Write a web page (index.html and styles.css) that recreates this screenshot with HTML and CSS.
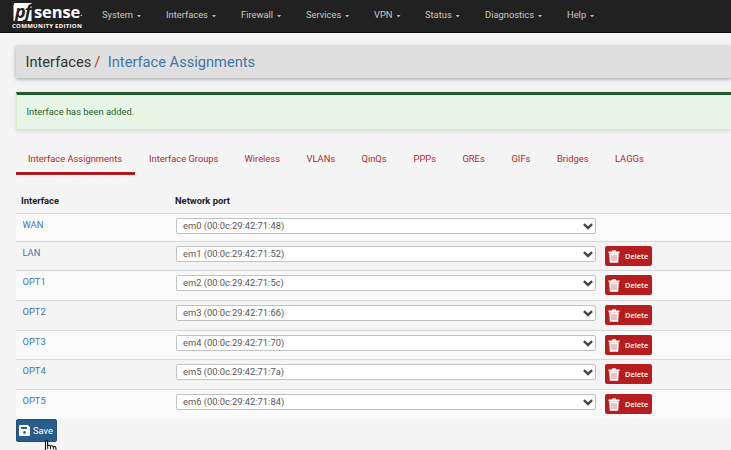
FILE: index.html
```html
<!DOCTYPE html>
<html lang="en">
<head>
<meta charset="utf-8">
<title>Interface Assignments</title>
<link rel="stylesheet" href="styles.css">
</head>
<body>
<svg class="defs" width="0" height="0" aria-hidden="true">
  <symbol id="trash" viewBox="0 0 12 13">
    <path d="M.5 1.5h3.2L4.5.2h3l.8 1.3h3.2v1.7H.5z" fill="#fff"/>
    <path d="M1.2 3.2h9.6L10.2 12.8H1.8z" fill="#fff"/>
    <path d="M4 5v6M6 5v6M8 5v6" stroke="#cf6668" stroke-width=".8"/>
  </symbol>
  <symbol id="chevron" viewBox="0 0 10 7">
    <path d="M.9 1.2L5 5l4.1-3.8" fill="none" stroke="#484848" stroke-width="2.4"/>
  </symbol>
</svg>
<header class="navbar">
  <div class="logo">
    <div class="brand">
      <svg class="mark" viewBox="0 0 18 18"><path d="M1 0h17v18H0V2z" fill="#fff"/></svg>
      <span class="pf">pf</span><span class="sense">sense</span><span class="dot">.</span>
    </div>
    <div class="edition">COMMUNITY EDITION</div>
  </div>
  <nav class="menu">
    <a class="m1">System<i></i></a><a class="m2">Interfaces<i></i></a><a class="m3">Firewall<i></i></a><a class="m4">Services<i></i></a><a class="m5">VPN<i></i></a><a class="m6">Status<i></i></a><a class="m7">Diagnostics<i></i></a><a class="m8">Help<i></i></a>
  </nav>
</header>
<main>
  <h1 class="crumbs"><span>Interfaces</span><b>/</b><a>Interface Assignments</a></h1>
  <div class="alert">Interface has been added.</div>
  <nav class="tabs">
    <a class="t1 active">Interface Assignments</a><a class="t2">Interface Groups</a><a class="t3">Wireless</a><a class="t4">VLANs</a><a class="t5">QinQs</a><a class="t6">PPPs</a><a class="t7">GREs</a><a class="t8">GIFs</a><a class="t9">Bridges</a><a class="t10">LAGGs</a>
  </nav>
  <section class="table">
    <div class="head"><span>Interface</span><span>Network port</span></div>
    <div class="row odd r28"><a>WAN</a><div class="select">em0 (00:0c:29:42:71:48)<svg><use href="#chevron"/></svg></div></div>
    <div class="row r29"><a>LAN</a><div class="select">em1 (00:0c:29:42:71:52)<svg><use href="#chevron"/></svg></div><button class="delete"><svg><use href="#trash"/></svg>Delete</button></div>
    <div class="row odd"><a>OPT1</a><div class="select">em2 (00:0c:29:42:71:5c)<svg><use href="#chevron"/></svg></div><button class="delete"><svg><use href="#trash"/></svg>Delete</button></div>
    <div class="row"><a>OPT2</a><div class="select">em3 (00:0c:29:42:71:66)<svg><use href="#chevron"/></svg></div><button class="delete"><svg><use href="#trash"/></svg>Delete</button></div>
    <div class="row odd r29"><a>OPT3</a><div class="select">em4 (00:0c:29:42:71:70)<svg><use href="#chevron"/></svg></div><button class="delete"><svg><use href="#trash"/></svg>Delete</button></div>
    <div class="row"><a>OPT4</a><div class="select">em5 (00:0c:29:42:71:7a)<svg><use href="#chevron"/></svg></div><button class="delete"><svg><use href="#trash"/></svg>Delete</button></div>
    <div class="row odd"><a>OPT5</a><div class="select">em6 (00:0c:29:42:71:84)<svg><use href="#chevron"/></svg></div><button class="delete"><svg><use href="#trash"/></svg>Delete</button></div>
  </section>
  <button class="save">
    <svg viewBox="0 0 11 11"><path d="M1.2 0h7.6L11 2.2v7.6a1.2 1.2 0 0 1-1.2 1.2H1.2A1.2 1.2 0 0 1 0 9.8V1.2A1.2 1.2 0 0 1 1.2 0z" fill="#fff"/><path d="M2 2h6v2H2z" fill="#285c8b"/><circle cx="5.5" cy="7.4" r="1.4" fill="#285c8b"/></svg>Save
  </button>
</main>
<svg class="cursor" viewBox="0 0 14 12"><path d="M1.5 12V1.6C1.5.3 3.6.3 3.6 1.6V6c.3-1.1 2.7-1 2.9.3.5-.9 2.6-.7 2.8.6.7-.8 2.6-.3 2.6 1.1v4z" fill="#fff" stroke="#111" stroke-width="1.1"/><path d="M3.7 5.5V9M6.5 6v3M9.4 7v2.4" stroke="#111"/></svg>
</body>
</html>
```

FILE: styles.css
```css
* { box-sizing: border-box; }
body {
  margin: 0;
  height: 450px;
  overflow: hidden;
  position: relative;
  background: #f4f4f4;
  font: 9.35px/14px Roboto, sans-serif;
  color: #333;
}
.defs { position: absolute; }
a { color: #3f76ab; }
button { font: inherit; }

.navbar {
  height: 33px;
  display: flex;
  background: #212121;
  border-bottom: 1px solid #080808;
}
.logo { width: 102px; padding: 3px 0 0 13px; color: #fff; }
.brand { position: relative; height: 18px; display: flex; }
.mark { width: 19px; height: 18px; }
.pf {
  position: absolute;
  left: 2px;
  top: 0;
  font: italic bold 18px/17px "Open Sans", sans-serif;
  letter-spacing: -1px;
  color: #212121;
}
.sense { margin-left: 2px; font: bold 16.5px/18px "Open Sans", sans-serif; letter-spacing: -0.1px; }
.dot { font: bold 7px/14px "Open Sans", sans-serif; padding-top: 4px; height: 18px; }
.edition {
  margin: 2px 0 0 -1px;
  font: bold 6px/7px "Open Sans", sans-serif;
  letter-spacing: 0.3px;
  white-space: nowrap;
}
.menu { display: flex; padding-top: 8px; }
.menu a { color: #c8c8c8; display: flex; white-space: nowrap; }
.menu i {
  margin: 7px 0 0 4px;
  width: 4px;
  height: 2px;
  background: #bbb;
  clip-path: polygon(0 0, 100% 0, 60% 100%, 40% 100%);
}
.m1 { width: 64px; }
.m2 { width: 75px; }
.m3 { width: 65px; }
.m4 { width: 68px; }
.m5 { width: 51px; }
.m6 { width: 60px; }
.m7 { width: 82px; }

main { padding: 13px 0 0 16px; }
.crumbs {
  margin: 0;
  height: 32px;
  padding-left: 9.5px;
  display: flex;
  background: #dfdfdf;
  box-shadow: 0 1px 4px rgba(0, 0, 0, 0.35);
  font: 14.65px/32px Roboto, sans-serif;
}
.crumbs b { margin: 0 7.5px 0 3px; font-weight: 400; color: #c9302c; }

.alert {
  margin-top: 14px;
  height: 38px;
  padding: 11px 9.5px 0;
  background: #e6f5e6;
  border: 1px solid #d9ebcf;
  border-top: 3px solid #205c2b;
  border-right: 0;
  box-shadow: 0 1px 4px rgba(0, 0, 0, 0.12);
  color: #265f2b;
  line-height: 12px;
}

.tabs { display: flex; margin-top: 14px; height: 31px; }
.tabs a { padding: 8px 0 0 12px; color: #b0282c; white-space: nowrap; }
.tabs .active { border-bottom: 3px solid #ab1a20; margin-right: 2px; }
.t1 { width: 119px; }
.t2 { width: 95.5px; }
.t3 { width: 62px; }
.t4 { width: 55px; }
.t5 { width: 52px; }
.t6 { width: 49px; }
.t7 { width: 49px; }
.t8 { width: 45.5px; }
.t9 { width: 58px; }

.head {
  display: grid;
  grid-template-columns: 154px 1fr;
  height: 38px;
  padding: 19px 0 0 5px;
  font-weight: 700;
  color: #222;
}
.row {
  display: grid;
  grid-template-columns: 153.5px 420px 56px;
  align-items: start;
  height: 30px;
  padding: 4px 0 0 6.5px;
  border-top: 1px solid #d8d8d8;
}
.row.odd { background: #f9f9f9; }
.row.r28 { height: 28px; }
.row.r29 { height: 29px; }
.row > a { line-height: 13px; }
.select {
  height: 16px;
  display: flex;
  justify-content: space-between;
  padding: 0 2px 0 6px;
  border: 1px solid #c2c2c2;
  border-radius: 2px;
  background: #fff;
  color: #555;
}
.select svg { width: 10px; height: 7px; margin-top: 4px; }
.delete {
  width: 47px;
  height: 20px;
  margin: 0 0 0 9px;
  padding: 0 0 0 3px;
  display: flex;
  align-items: center;
  gap: 5px;
  border: 0;
  border-radius: 2px;
  background: #b71c1f;
  color: #fff;
  font: 600 7.4px/14px "Open Sans", sans-serif;
}
.delete svg { width: 12px; height: 13px; }
.save {
  display: flex;
  align-items: center;
  gap: 3px;
  width: 41px;
  height: 23px;
  padding: 0 0 0 2px;
  border: 1px solid #1f4e79;
  border-radius: 2px;
  background: #285c8b;
  color: #fff;
}
.save svg { width: 11px; height: 11px; }
.cursor { position: absolute; left: 44px; top: 440px; width: 14px; height: 12px; }
```
